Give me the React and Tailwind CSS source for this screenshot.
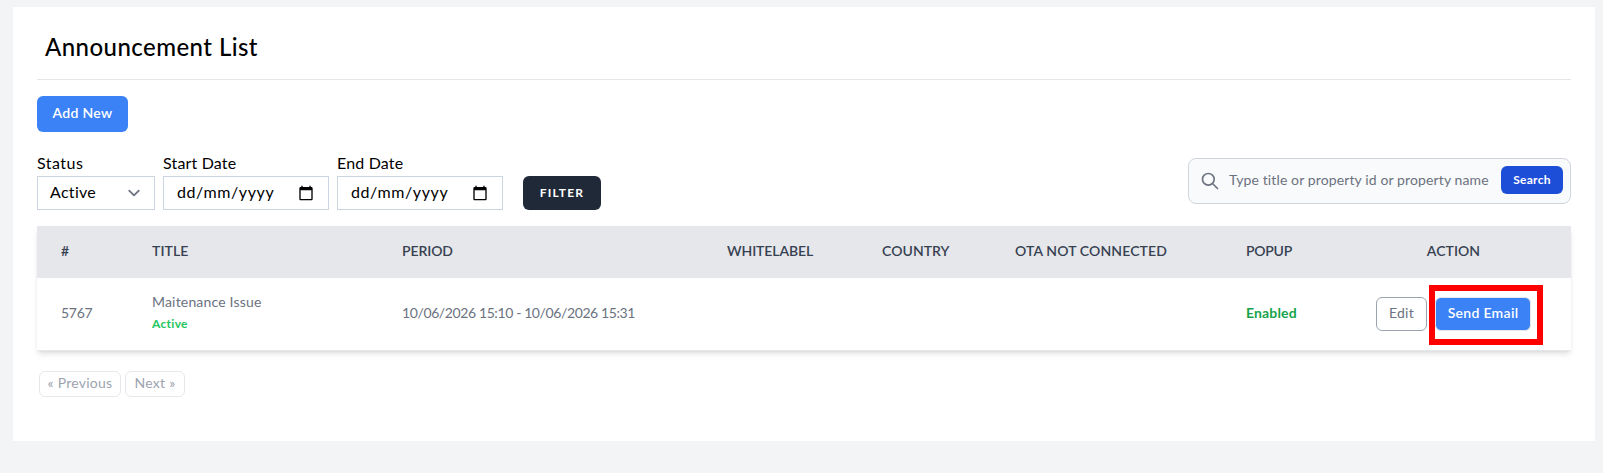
import React, { useState } from "react";

const COLUMNS = [
  { label: "#", style: "w-[91px]" },
  { label: "Title", style: "w-[250px]" },
  { label: "Period", style: "w-[325px] tracking-[-0.1px]" },
  { label: "Whitelabel", style: "w-[155px] tracking-[-0.09px]" },
  { label: "Country", style: "w-[133px]" },
  { label: "OTA not connected", style: "w-[231px] tracking-[0.12px]" },
  { label: "Popup", style: "w-[114px] tracking-[-0.25px]" },
  { label: "Action", style: "w-[235px] text-center" },
];

const ANNOUNCEMENTS = [
  {
    id: 5767,
    title: "Maitenance Issue",
    status: "Active",
    period: "10/06/2026 15:10 - 10/06/2026 15:31",
    popup: "Enabled",
  },
];

function ChevronIcon() {
  return (
    <svg className="w-6 h-6 text-[#6b7280]" viewBox="0 0 20 20" fill="none" stroke="currentColor" strokeWidth="1.5" strokeLinecap="round" strokeLinejoin="round">
      <path d="M6 8l4 4 4-4" />
    </svg>
  );
}

function CalendarIcon() {
  return (
    <svg className="w-4 h-4" viewBox="0 0 24 24" fill="#000">
      <path d="M20 3h-1V1h-2v2H7V1H5v2H4c-1.100 0-2 .9-2 2v16c0 1.100.9 2 2 2h16c1.100 0 2-.9 2-2V5c0-1.100-.9-2-2-2zm0 18H4V8h16v13z" />
    </svg>
  );
}

function SearchIcon() {
  return (
    <svg className="w-5 h-5 text-[#6b7280]" viewBox="0 0 24 24" fill="none" stroke="currentColor" strokeWidth="2" strokeLinecap="round" strokeLinejoin="round">
      <path d="M21 21l-6-6m2-5a7 7 0 11-14 0 7 7 0 0114 0z" />
    </svg>
  );
}

function DateField({ label }) {
  return (
    <div className="w-[166px]">
      <div className="leading-[22px] pb-0.5 tracking-[0.17px]">{label}</div>
      <div className="flex items-center justify-between h-[34px] pl-[13px] pr-[14px] border border-[#cbd5e1]">
        <span className="pb-0.5 tracking-[0.6px]">dd/mm/yyyy</span>
        <CalendarIcon />
      </div>
    </div>
  );
}

export default function App() {
  const [query, setQuery] = useState("");

  return (
    <div className="h-[473px] bg-[#f3f4f6] pt-[7px] pl-[13px] pr-2 font-[Lato,'Open_Sans',sans-serif] text-base text-black tracking-[0.3px]">
      <div className="h-[434px] bg-white px-6 pt-6">
        <h2 className="h-[49px] px-2 border-b border-[#e5e7eb] text-2xl leading-8 font-medium tracking-[0.44px]">Announcement List</h2>

        <button className="block mt-4 w-[91px] h-9 pb-0.5 rounded-md bg-[#3b82f6] text-white text-sm font-semibold">Add New</button>

        <div className="flex justify-between mt-5">
          <div className="flex items-end gap-2">
            <div className="w-[118px]">
              <div className="leading-[22px] pb-0.5 tracking-[0.48px]">Status</div>
              <div className="flex items-center justify-between h-[34px] pl-3 pr-2 border border-[#cbd5e1]">
                <span className="pb-0.5">Active</span>
                <ChevronIcon />
              </div>
            </div>
            <DateField label="Start Date" />
            <DateField label="End Date" />
            <button className="ml-3 w-[78px] h-[34px] rounded-md bg-[#1f2937] text-white text-xs font-bold uppercase tracking-widest">Filter</button>
          </div>

          <div className="flex items-center w-[383px] h-[46px] mt-1.5 mb-1.5 pl-[11px] pr-[7px] rounded-lg border border-[#d1d5db] bg-[#f9fafb]">
            <SearchIcon />
            <input
              className="flex-1 min-w-0 ml-[9px] pb-0.5 text-sm tracking-[0.12px] placeholder-[#6b7280] outline-none"
              placeholder="Type title or property id or property name"
              value={query}
              onChange={e => setQuery(e.target.value)}
            />
            <button className="w-[62px] h-7 mb-0.5 rounded-md bg-[#1d4ed8] text-white text-xs font-bold">Search</button>
          </div>
        </div>

        <table className="mt-4 w-[1534px] table-fixed text-left text-sm text-[#6b7280] shadow-md">
          <thead className="bg-[#e5e7eb] text-[#374151] uppercase tracking-[0.06px]">
            <tr className="h-[52px]">
              {COLUMNS.map(col => (
                <th key={col.label} className={`${col.style} px-6 pb-0.5 font-semibold`}>{col.label}</th>
              ))}
            </tr>
          </thead>
          <tbody>
            {ANNOUNCEMENTS.map(item => (
              <tr key={item.id} className="h-[72px] bg-white border-b border-[#e5e7eb]">
                <td className="px-6 pb-0.5 tracking-[-0.3px]">{item.id}</td>
                <td className="px-6">
                  <div className="-mt-0.5 mb-0.5 leading-5 tracking-[0.18px]">{item.title}</div>
                  <div className="text-xs leading-5 font-bold text-[#22c55e]">{item.status}</div>
                </td>
                <td className="px-6 pb-0.5 tracking-[-0.39px]">{item.period}</td>
                <td />
                <td />
                <td />
                <td className="px-6 pb-0.5 font-bold text-[#16a34a] tracking-[0.15px]">{item.popup}</td>
                <td>
                  <div className="flex items-center ml-10">
                    <button className="w-[51px] h-[34px] pb-0.5 rounded-md border border-[#9ca3af]">Edit</button>
                    <div className="flex items-center w-[114px] h-[60px] -mt-[3px] -mb-[5px] ml-0.5 pb-0.5 border-6 border-[#ff0000]">
                      <button className="w-[96px] h-[34px] pb-0.5 rounded-md border border-[#e5e7eb] bg-[#3b82f6] text-white font-semibold">Send Email</button>
                    </div>
                  </div>
                </td>
              </tr>
            ))}
          </tbody>
        </table>

        <div className="flex gap-1 mt-5 ml-0.5 text-sm text-[#9ca3af]">
          <button className="w-[82px] h-[26px] pb-px rounded-md border border-[#e5e7eb] tracking-[0.25px]">« Previous</button>
          <button className="w-[60px] h-[26px] pb-px rounded-md border border-[#e5e7eb]">Next »</button>
        </div>
      </div>
    </div>
  );
}
